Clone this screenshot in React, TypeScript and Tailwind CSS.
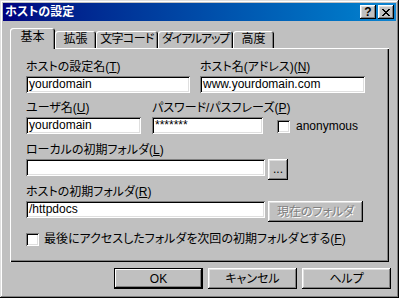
import React from "react";

const raised =
  "shadow-[inset_-1px_-1px_#000,inset_1px_1px_#fff,inset_-2px_-2px_#808080,inset_2px_2px_#dfdfdf]";
const sunken =
  "shadow-[inset_1px_1px_#808080,inset_-1px_-1px_#fff,inset_2px_2px_#000,inset_-2px_-2px_#dfdfdf]";

function Label({ text, mn }: { text: string; mn: string }) {
  return (
    <div className="h-[15px] leading-[13px] whitespace-nowrap">
      {text}(<span className="underline underline-offset-1">{mn}</span>)
    </div>
  );
}

function Field({ w, value = "" }: { w: string; value?: string }) {
  return (
    <div className={`${w} h-[17px] bg-white ${sunken} pl-[3px] leading-[17px] whitespace-nowrap overflow-hidden`}>
      {value}
    </div>
  );
}

function Check() {
  return <div className={`shrink-0 w-[13px] h-[13px] bg-white ${sunken}`} />;
}

const tabs = [
  { label: "拡張", cls: "w-[41px]" },
  { label: "文字コード", cls: "w-[62px] tracking-[-0.6px]" },
  { label: "ダイアルアップ", cls: "w-[75px] tracking-[-1.2px]" },
  { label: "高度", cls: "w-[41px]" },
];

export default function App() {
  return (
    <div className="w-[399px] h-[298px] bg-[#c0c0c0] p-[3px] text-[12px] text-black font-['Liberation_Sans','Noto_Sans_CJK_JP',sans-serif] [font-feature-settings:'palt'] shadow-[inset_-1px_-1px_#000,inset_1px_1px_#dfdfdf,inset_-2px_-2px_#808080,inset_2px_2px_#fff]">
      {/* title bar */}
      <div className="h-[18px] flex items-center justify-between px-[2px] bg-gradient-to-r from-[#000080] to-[#1084d0]">
        <span className="text-white font-bold leading-[18px]">ホストの設定</span>
        <div className="flex gap-[2px]">
          <div className={`w-[16px] h-[14px] bg-[#c0c0c0] ${raised} flex items-center justify-center font-bold text-[12px] leading-none`}>
            ?
          </div>
          <div className={`w-[16px] h-[14px] bg-[#c0c0c0] ${raised} flex items-center justify-center`}>
            <svg width="8" height="7" viewBox="0 0 8 7" shapeRendering="crispEdges">
              <path d="M0 0h2v1h-2zM6 0h2v1h-2zM1 1h2v1h-2zM5 1h2v1h-2zM2 2h4v1h-4zM3 3h2v1h-2zM2 4h4v1h-4zM1 5h2v1h-2zM5 5h2v1h-2zM0 6h2v1h-2zM6 6h2v1h-2z" fill="#000" />
            </svg>
          </div>
        </div>
      </div>

      {/* tabs */}
      <div className="mt-[7px] h-[20px] pl-[7px] flex items-end">
        <div className="relative z-10 w-[45px] h-[21px] -mb-[1px] bg-[#c0c0c0] rounded-t-[3px] shadow-[inset_1px_1px_#fff,inset_-1px_0_#000,inset_-2px_0_#808080] flex items-start justify-center pt-[3px] leading-[13px]">
          基本
        </div>
        {tabs.map((t) => (
          <div
            key={t.label}
            className={`${t.cls} h-[17px] bg-[#c0c0c0] rounded-t-[3px] shadow-[inset_1px_1px_#fff,inset_-1px_0_#000,inset_-2px_0_#808080] flex items-start justify-center pt-[2px] leading-[13px] whitespace-nowrap`}
          >
            {t.label}
          </div>
        ))}
      </div>

      {/* panel */}
      <div className="ml-[7px] w-[379px] h-[214px] pl-[16px] pt-[13px] shadow-[inset_1px_1px_#fff,inset_-1px_-1px_#000,inset_-2px_-2px_#808080]">
        <div className="flex gap-[10px]">
          <div className="w-[164px]">
            <Label text="ホストの設定名" mn="T" />
            <Field w="w-[164px]" value="yourdomain" />
          </div>
          <div className="w-[165px]">
            <Label text="ホスト名(アドレス)" mn="N" />
            <Field w="w-[165px]" value="www.yourdomain.com" />
          </div>
        </div>

        <div className="mt-[9px] flex items-end">
          <div className="w-[115px]">
            <Label text="ユーザ名" mn="U" />
            <Field w="w-[115px]" value="yourdomain" />
          </div>
          <div className="ml-[11px] w-[111px]">
            <Label text="パスワード/パスフレーズ" mn="P" />
            <Field w="w-[111px]" value="*******" />
          </div>
          <div className="ml-[14px] mb-[1px] flex items-center gap-[6px]">
            <Check />
            <span className="leading-[13px]">anonymous</span>
          </div>
        </div>

        <div className="mt-[10px]">
          <Label text="ローカルの初期フォルダ" mn="L" />
          <div className="flex items-start gap-[3px]">
            <Field w="w-[239px]" />
            <div className={`w-[20px] h-[21px] ${raised} flex items-center justify-center leading-none pb-[2px]`}>
              ...
            </div>
          </div>
        </div>

        <div className="mt-[6px]">
          <Label text="ホストの初期フォルダ" mn="R" />
          <div className="flex items-start gap-[3px]">
            <Field w="w-[239px]" value="/httpdocs" />
            <div className={`w-[95px] h-[21px] ${raised} flex items-center justify-center text-[#808080] [text-shadow:1px_1px_0_#fff]`}>
              現在のフォルダ
            </div>
          </div>
        </div>

        <div className="mt-[11px] flex items-center gap-[5px]">
          <Check />
          <span className="leading-[13px] whitespace-nowrap">
            最後にアクセスしたフォルダを次回の初期フォルダとする(<span className="underline underline-offset-1">F</span>)
          </span>
        </div>
      </div>

      {/* buttons */}
      <div className="mt-[6px] pr-[5px] flex justify-end gap-[5px]">
        <div className="w-[89px] h-[21px] border border-black shadow-[inset_-1px_-1px_#000,inset_1px_1px_#fff,inset_-2px_-2px_#808080] flex items-center justify-center">
          OK
        </div>
        <div className={`w-[89px] h-[21px] ${raised} flex items-center justify-center`}>キャンセル</div>
        <div className={`w-[89px] h-[21px] ${raised} flex items-center justify-center`}>ヘルプ</div>
      </div>
    </div>
  );
}
